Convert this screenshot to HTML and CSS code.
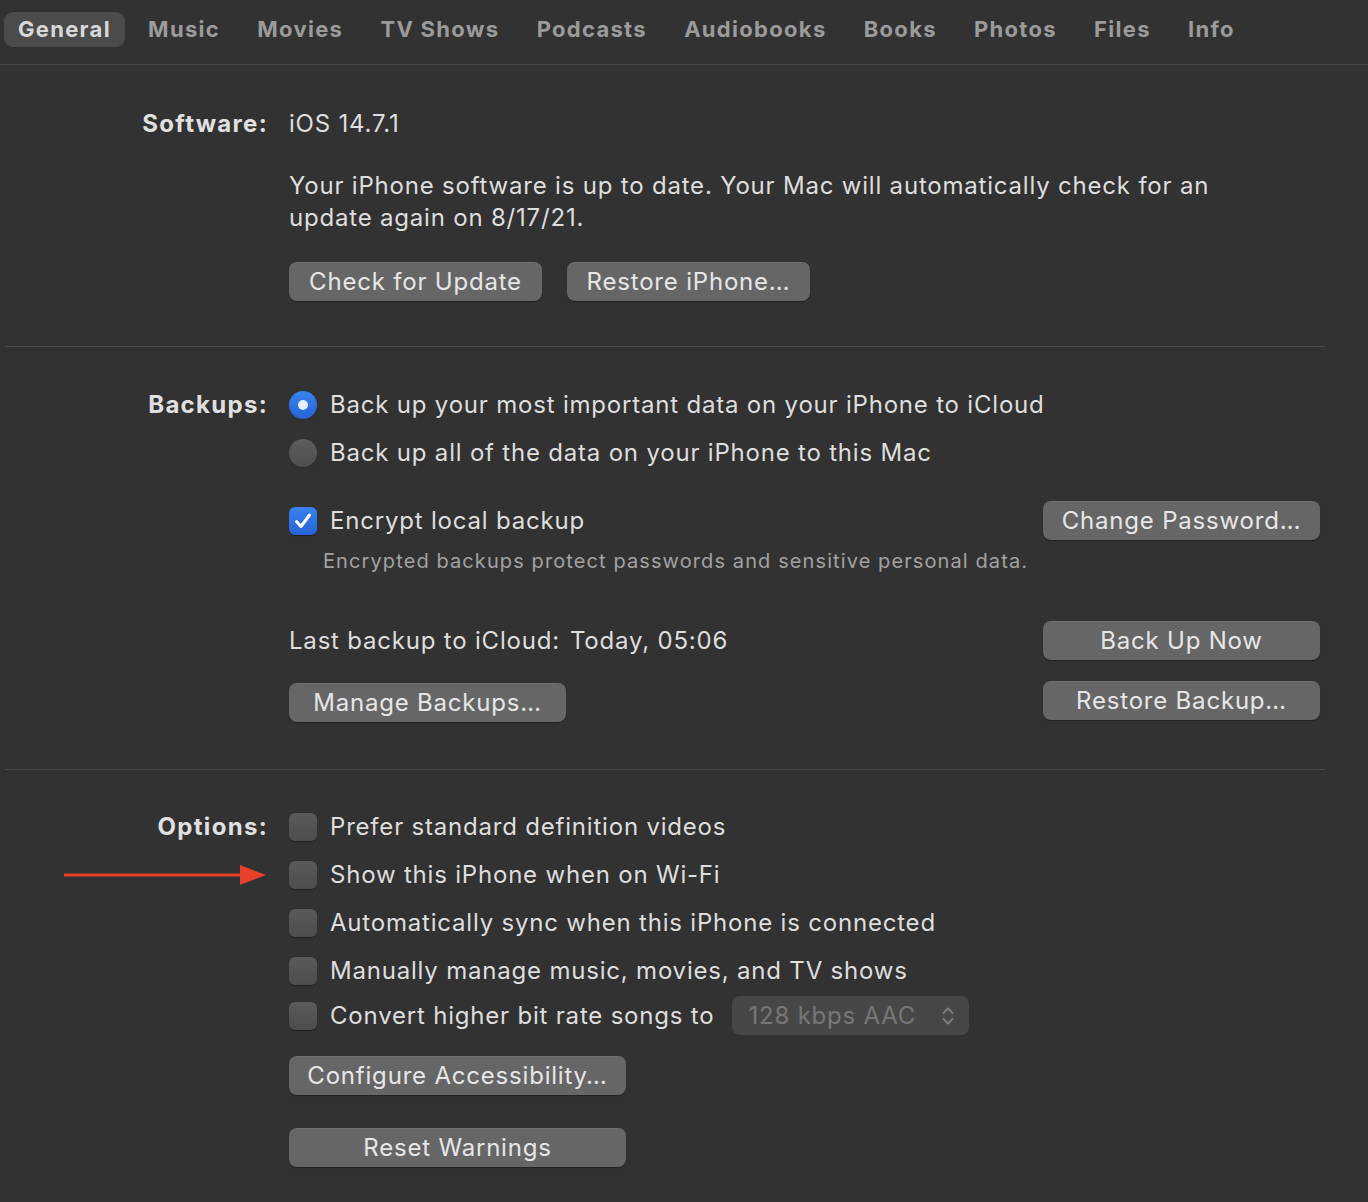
FILE: index.html
```html
<!DOCTYPE html>
<html>
<head>
<meta charset="utf-8">
<link rel="stylesheet" href="styles.css">
</head>
<body>
<nav class="tabbar">
  <span class="tab active">General</span>
  <span class="tab">Music</span>
  <span class="tab">Movies</span>
  <span class="tab">TV Shows</span>
  <span class="tab">Podcasts</span>
  <span class="tab">Audiobooks</span>
  <span class="tab">Books</span>
  <span class="tab">Photos</span>
  <span class="tab">Files</span>
  <span class="tab">Info</span>
</nav>
<main class="panel">
  <section class="section software">
    <div class="label">Software:</div>
    <div class="content">
      <div class="line">iOS 14.7.1</div>
      <p class="desc">Your iPhone software is up to date. Your Mac will automatically check for an update again on 8/17/21.</p>
      <div class="btnrow">
        <button class="btn w-check">Check for Update</button>
        <button class="btn w-restore">Restore iPhone…</button>
      </div>
    </div>
  </section>

  <section class="section backups">
    <div class="label">Backups:</div>
    <div class="content">
      <div class="line choice"><span class="radio on"></span>Back up your most important data on your iPhone to iCloud</div>
      <div class="line choice second"><span class="radio"></span>Back up all of the data on your iPhone to this Mac</div>
      <div class="split encrypt">
        <div class="choice"><span class="check on"><svg viewBox="0 0 28 28" width="28" height="28"><path d="M7.5 14.5 L12 19.5 L20.5 8" fill="none" stroke="#fff" stroke-width="3" stroke-linecap="round" stroke-linejoin="round"/></svg></span>Encrypt local backup</div>
        <button class="btn w-right">Change Password…</button>
      </div>
      <div class="hint">Encrypted backups protect passwords and sensitive personal data.</div>
      <div class="split lastbackup">
        <div class="lastline"><span>Last backup to iCloud:</span><span>Today, 05:06</span></div>
        <button class="btn w-right">Back Up Now</button>
      </div>
      <div class="split manage">
        <button class="btn w-manage">Manage Backups…</button>
        <button class="btn w-right">Restore Backup…</button>
      </div>
    </div>
  </section>

  <section class="section options">
    <div class="label">Options:</div>
    <div class="content">
      <div class="line choice"><span class="check"></span>Prefer standard definition videos</div>
      <div class="line choice gap"><span class="check"></span>Show this iPhone when on Wi-Fi</div>
      <div class="line choice gap"><span class="check"></span>Automatically sync when this iPhone is connected</div>
      <div class="line choice gap"><span class="check"></span>Manually manage music, movies, and TV shows</div>
      <div class="choice convert"><span class="check"></span>Convert higher bit rate songs to
        <span class="popup">128 kbps AAC<svg class="chev" viewBox="0 0 14 22" width="14" height="22"><path d="M2.5 8 L7 3.5 L11.5 8 M2.5 14 L7 18.5 L11.5 14" fill="none" stroke="#7c7c7c" stroke-width="2" stroke-linecap="round" stroke-linejoin="round"/></svg></span>
      </div>
      <button class="btn w-wide configure">Configure Accessibility…</button>
      <button class="btn w-wide reset">Reset Warnings</button>
    </div>
  </section>
</main>
<svg class="arrow" width="210" height="24" viewBox="0 0 210 24"><line x1="0" y1="12" x2="180" y2="12" stroke="#e8412a" stroke-width="3"/><polygon points="176,2 202,12 176,22" fill="#e8412a"/></svg>
</body>
</html>
```
FILE: styles.css
```css
* { box-sizing: border-box; }
html, body { margin: 0; padding: 0; }
body {
  background: #323232;
  color: #dedede;
  font-family: Inter, "Noto Sans", "Liberation Sans", sans-serif;
  font-size: 24px;
  width: 1368px;
  height: 1202px;
  overflow: hidden;
  position: relative;
  letter-spacing: 0.8px;
}
.tabbar {
  display: flex;
  align-items: center;
  gap: 9.2px;
  height: 65px;
  padding: 12px 0 17px 4px;
  border-bottom: 1px solid #474747;
}
.tab {
  font-weight: 700;
  font-size: 22px;
  color: #9b9b9b;
  height: 35px;
  line-height: 35px;
  padding: 0 14px;
  border-radius: 9px;
  letter-spacing: 1.3px;
}
.tab.active {
  background: #4b4b4b;
  color: #d8d8d8;
}
.panel {
  width: 1320px;
  margin-left: 5px;
}
.section {
  display: grid;
  grid-template-columns: 263px 1fr;
  column-gap: 21px;
  padding-right: 5px;
  border-bottom: 1px solid #494949;
}
.section:last-child { border-bottom: none; }
.label {
  text-align: right;
  font-weight: 700;
  line-height: 32px;
  color: #e0e0e0;
  letter-spacing: 1.3px;
}
.software { padding-top: 43px; padding-bottom: 45px; }
.backups { padding-top: 42px; padding-bottom: 47px; }
.options { padding-top: 41px; }
.line { line-height: 32px; height: 32px; }
.desc {
  margin: 30px 0 0 0;
  line-height: 32px;
  max-width: 940px;
}
.btnrow { display: flex; gap: 25px; margin-top: 28px; }
.btn {
  font-family: inherit;
  font-size: 24px;
  letter-spacing: 0.8px;
  color: #e6e6e6;
  background: #666666;
  border: none;
  border-radius: 8px;
  height: 39px;
  padding: 0;
  box-shadow: 0 1px 1px rgba(0,0,0,0.35), inset 0 1px 0 rgba(255,255,255,0.06);
  display: flex;
  align-items: center;
  justify-content: center;
}
.w-check { width: 253px; }
.w-restore { width: 243px; }
.w-right { width: 277px; }
.w-manage { width: 277px; margin-top: 2px; }
.w-wide { width: 337px; }
.choice { display: flex; align-items: center; gap: 13px; }
.second { margin-top: 16px; }
.gap { margin-top: 16px; }
.radio {
  width: 28px; height: 28px;
  border-radius: 50%;
  background: linear-gradient(#5d5d5d, #4f4f4f);
  box-shadow: 0 0.5px 1px rgba(0,0,0,0.4);
  flex: none;
  display: flex; align-items: center; justify-content: center;
}
.radio.on { background: linear-gradient(#3b82f0, #2563d6); }
.radio.on::after {
  content: "";
  width: 10px; height: 10px; border-radius: 50%;
  background: #e8eefb;
}
.check {
  width: 28px; height: 28px;
  border-radius: 6px;
  background: linear-gradient(#5b5b5b, #4c4c4c);
  box-shadow: 0 0.5px 1px rgba(0,0,0,0.4);
  flex: none;
  display: flex;
}
.check.on { background: linear-gradient(#3b82f0, #2563d6); }
.split {
  display: flex;
  justify-content: space-between;
  align-items: center;
}
.encrypt { margin-top: 32px; }
.hint {
  margin: 7px 0 0 34px;
  font-size: 20px;
  line-height: 28px;
  color: #a2a2a2;
  letter-spacing: 1.1px;
}
.lastbackup { margin-top: 46px; }
.lastline { display: flex; gap: 10px; }
.manage { margin-top: 21px; align-items: flex-start; }
.convert { margin-top: 9px; height: 39px; }
.popup {
  margin-left: 5px;
  width: 237px;
  height: 39px;
  border-radius: 8px;
  background: #474747;
  color: #777777;
  display: flex;
  align-items: center;
  padding: 0 14px 0 16px;
  justify-content: space-between;
}
.configure { margin-top: 21px; }
.reset { margin-top: 33px; }
.arrow {
  position: absolute;
  left: 64px;
  top: 863px;
}
```
